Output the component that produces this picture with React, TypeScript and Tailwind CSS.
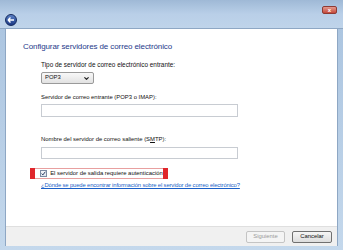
import { ChevronDown } from "lucide-react";

const App = () => {
  return (
    <div
      className="w-[343px] h-[250px] overflow-hidden bg-gradient-to-b from-[#a9c3df] to-[#c4d8ec] flex flex-col"
      style={{ fontFamily: '"Liberation Sans", Arial, sans-serif' }}
    >
      {/* Title bar */}
      <div className="h-[29px] flex items-start justify-between pl-[5px] pr-[6px] bg-gradient-to-b from-[#9fb9d6] via-[#b9cfe8] to-[#bfd4ea] border-b border-[#8ea7c4]">
        <div className="mt-[14px] w-[12px] h-[12px] rounded-full bg-gradient-to-b from-[#5a7fc4] to-[#1d3a86] border border-[#13295e] flex items-center justify-center">
          <svg width="8" height="6" viewBox="0 0 8 6">
            <path d="M1 3h6M1 3l2.5-2.5M1 3l2.5 2.5" stroke="#fff" strokeWidth="1.4" fill="none" />
          </svg>
        </div>
        <div className="mt-[6px] w-[15px] h-[8px] rounded-[2px] bg-gradient-to-b from-[#e39a8f] to-[#c4473a] border border-[#8e3a33] flex items-center justify-center">
          <span className="text-[6px] leading-none text-white font-bold">x</span>
        </div>
      </div>

      {/* Body */}
      <div className="flex-1 flex px-[5px] pb-[4px]">
        <div className="flex-1 flex flex-col bg-white border-x border-[#8ea7c4]">
          <div className="flex-1 flex flex-col pl-[17px]">
            <h1 className="mt-[12px] text-[8px] leading-[12px] tracking-[-0.1px] text-[#1e3a8a]">
              Configurar servidores de correo electrónico
            </h1>

            <div className="pl-[18px] flex flex-col text-[5.9px] leading-[9px] text-[#111] whitespace-nowrap">
              <p className="mt-[7px] text-[6.4px]">Tipo de servidor de correo electrónico entrante:</p>
              <div className="mt-[3px] w-[53px] h-[12px] border border-[#9a9a9a] rounded-[2px] bg-gradient-to-b from-[#f8f8f8] to-[#e2e2e2] flex items-center justify-between pl-[3px] pr-[3px]">
                <span className="leading-none">POP3</span>
                <ChevronDown className="w-[7px] h-[7px] text-[#222]" strokeWidth={4} />
              </div>

              <p className="mt-[9px]">Servidor de correo entrante (POP3 o IMAP):</p>
              <div className="mt-[2px] w-[197px] h-[13px] border border-[#c8ccd2] bg-white" />

              <p className="mt-[18px]">
                Nombre del servidor de correo saliente (S<span className="underline">M</span>TP):
              </p>
              <div className="mt-[3px] w-[197px] h-[12px] border border-[#c8ccd2] bg-white" />

              <div className="mt-[9px] -ml-[11px] w-[138px] h-[11px] flex items-stretch">
                <div className="w-[6px] bg-[#e0262b]" />
                <div className="flex-1 flex items-center gap-[3px] pl-[5px] border-y border-[#e8a0a0]">
                  <div className="w-[7px] h-[7px] border border-[#7a8aa3] bg-gradient-to-b from-[#f4f6f9] to-[#dde3ec] flex items-center justify-center">
                    <svg width="5" height="5" viewBox="0 0 5 5">
                      <path d="M0.6 2.6l1.3 1.3 2.5-3.2" stroke="#2a3e66" strokeWidth="1" fill="none" />
                    </svg>
                  </div>
                  <span className="leading-none">El servidor de salida requiere autenticación</span>
                </div>
                <div className="w-[6px] bg-[#e0262b]" />
              </div>

              <p className="mt-[2px] tracking-[-0.15px] text-[#1a5fc7] underline">
                ¿Dónde se puede encontrar información sobre el servidor de correo electrónico?
              </p>
            </div>
          </div>

          {/* Footer */}
          <div className="h-[20px] bg-[#f0f0f0] border-t border-[#dfdfdf] flex items-center justify-end gap-[7px] pr-[5px]">
            <div className="w-[39px] h-[12px] border border-[#c4c4c4] rounded-[2px] bg-[#f4f4f4] flex items-center justify-center">
              <span className="text-[5.9px] leading-none text-[#9a9a9a]">Siguiente</span>
            </div>
            <div className="w-[40px] h-[12px] border border-[#707070] rounded-[2px] bg-gradient-to-b from-[#f6f6f6] to-[#dddddd] flex items-center justify-center">
              <span className="text-[5.9px] leading-none text-[#111]">Cancelar</span>
            </div>
          </div>
        </div>
      </div>
    </div>
  );
};

export default App;
